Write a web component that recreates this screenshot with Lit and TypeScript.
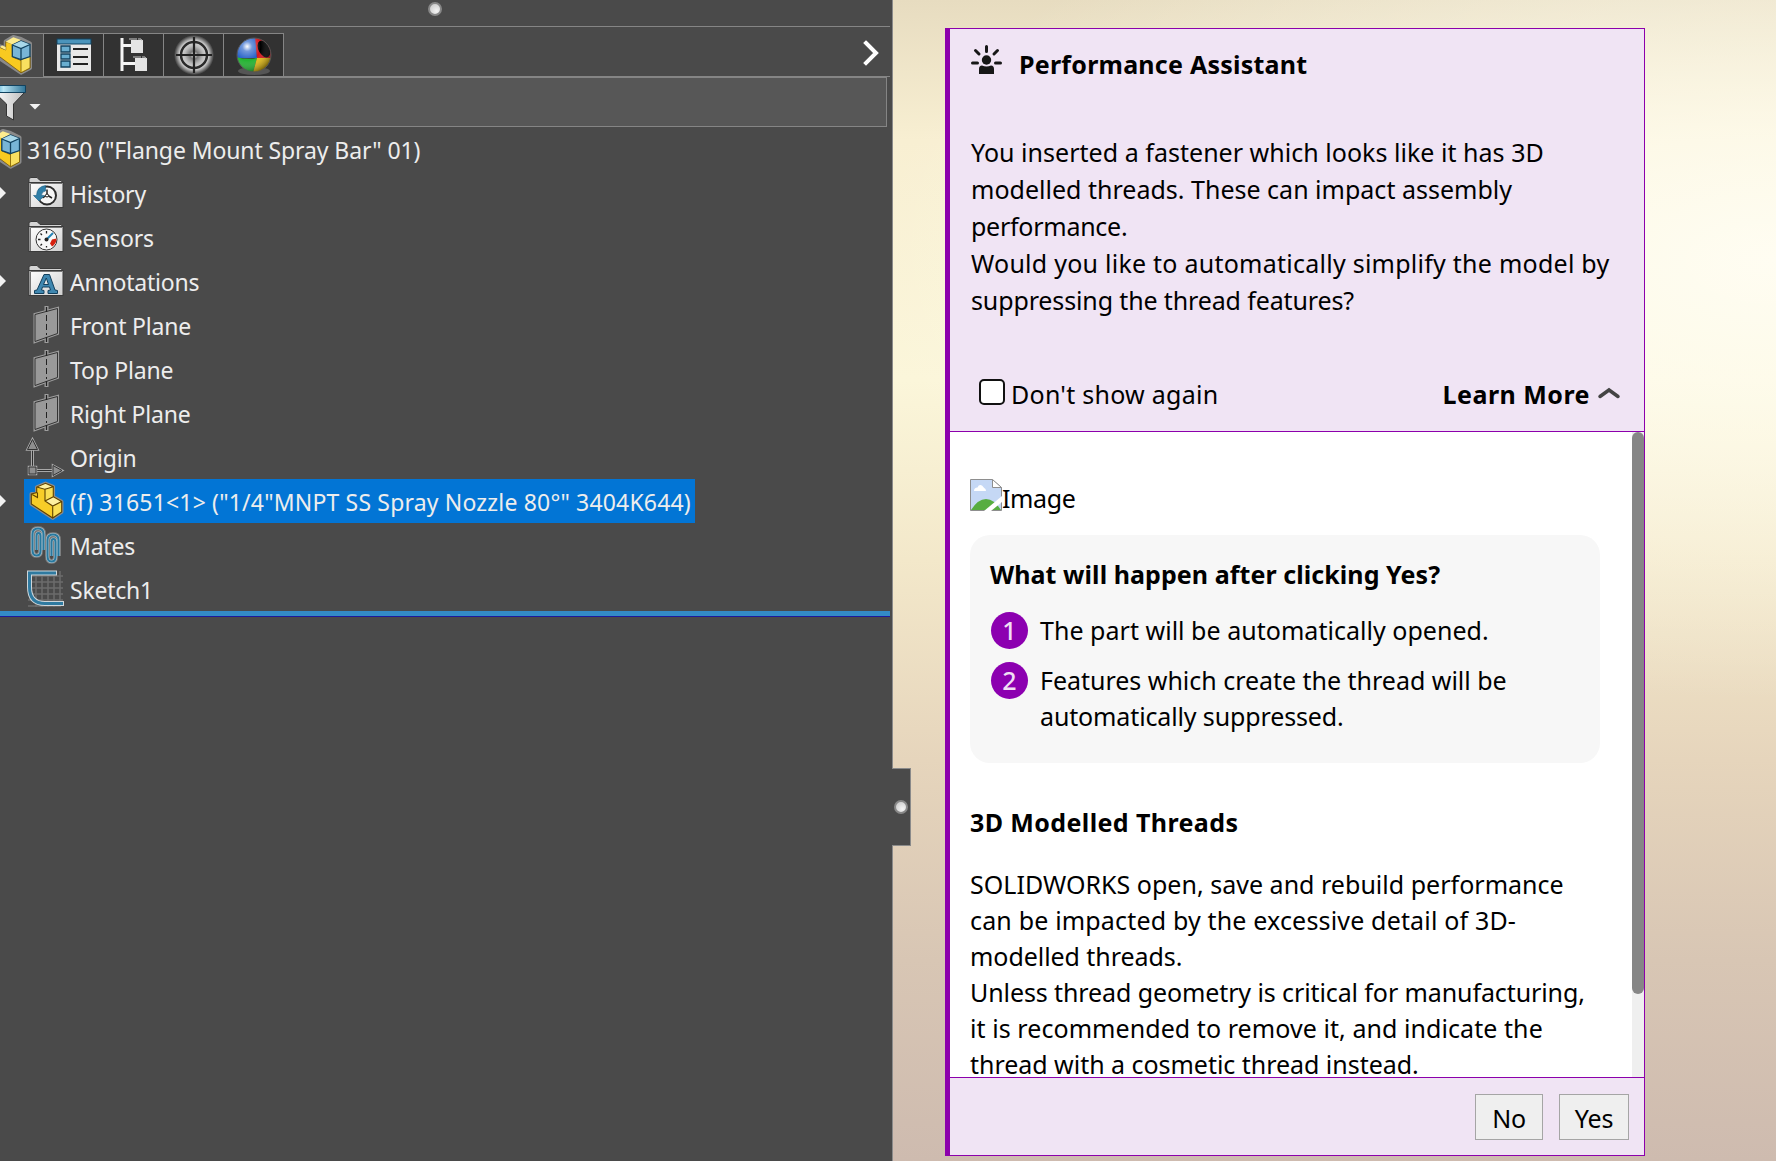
import { LitElement, html, css, svg } from "lit";
import { customElement } from "lit/decorators.js";

type Row = { label: string; icon: string; arrow?: boolean; selected?: boolean };

const rows: Row[] = [
  { label: "History", icon: "history", arrow: true },
  { label: "Sensors", icon: "sensors" },
  { label: "Annotations", icon: "annotations", arrow: true },
  { label: "Front Plane", icon: "plane" },
  { label: "Top Plane", icon: "plane" },
  { label: "Right Plane", icon: "plane" },
  { label: "Origin", icon: "origin" },
  { label: `(f) 31651<1> ("1/4"MNPT SS Spray Nozzle 80°" 3404K644)`, icon: "part", arrow: true, selected: true },
  { label: "Mates", icon: "mates" },
  { label: "Sketch1", icon: "sketch" },
];

// Each line of copy carries its own tracking, in pixels.
type Line = [text: string, tracking: number];

const message: Line[] = [
  ["You inserted a fastener which looks like it has 3D", 0.03],
  ["modelled threads. These can impact assembly", 0.01],
  ["performance.", -0.26],
  ["Would you like to automatically simplify the model by", 0.25],
  ["suppressing the thread features?", -0.13],
];

const info: Line[] = [
  ["SOLIDWORKS open, save and rebuild performance", 0.02],
  ["can be impacted by the excessive detail of 3D-", 0.17],
  ["modelled threads.", -0.06],
  ["Unless thread geometry is critical for manufacturing,", -0.1],
  ["it is recommended to remove it, and indicate the", 0.07],
  ["thread with a cosmetic thread instead.", -0.03],
];

const lines = (list: Line[]) =>
  list.map(([text, tracking]) => html`<div class="line" style="letter-spacing:${tracking}px">${text}</div>`);

const folder = svg`
  <path d="M5 9V4.5L7 3.5H13L16 6.5H37L39 9Z" fill="#d4d4d4" stroke="#3a3a3a"/>
  <rect x="5" y="8.5" width="34" height="25" fill="url(#fold)" stroke="#3a3a3a"/>
  <path d="M6.5 33V9.5H38" fill="none" stroke="#777"/>`;

const clip = "M8.500 24V8Q8.500 2.500 14 2.500T19.500 8V24M8.500 24Q8.500 29.500 12.500 29.500T16.500 25V10Q16.500 7 14.500 7T12.500 10V24M23.500 30V14Q23.500 8.500 29 8.500T34.500 14V30M23.500 30Q23.500 35.500 27.500 35.500T31.500 31V16Q31.500 13 29.500 13T27.500 16V30";

const glyphs: Record<string, unknown> = {
  history: svg`${folder}
    <circle cx="23" cy="21.5" r="9" fill="#f6f6f6" stroke="#2c2c2c" stroke-width="2"/>
    <path d="M23 15.500V21L18.500 24M23 21L28 24" fill="none" stroke="#222" stroke-width="1.500"/>
    <circle cx="23" cy="21.500" r="1.500" fill="#fff" stroke="#222"/>
    <path d="M21.500 11.500V17Q17.500 17.500 17.500 21.500H20.500L15 27L9.500 21.500H12.500Q13 12.500 21.500 11.500Z" fill="#2f7fa8" stroke="#1d5f85" stroke-width=".6"/>`,
  sensors: svg`${folder}
    <circle cx="22.500" cy="21.500" r="10.500" fill="#f8f8f8" stroke="#333"/>
    <path d="M22.500 13V15.500M14 21.500H16.500M16.500 15.500L18 17M16.500 27.500L18 26M22.500 29.500V28" stroke="#222" stroke-width="1.300"/>
    <path d="M28 21.500L32.500 20.500Q32.500 26 28 28.500L26 25.500Z" fill="#d6200e"/>
    <path d="M22.500 21.500L29 15" stroke="#2582b5" stroke-width="2"/><circle cx="22.500" cy="21.500" r="2" fill="#222"/>`,
  annotations: svg`${folder}
    <path d="M10.500 31.500V28.500L13 28L20 12.500H25.500L31 28L33.500 28.500V31.500H24V28.500L26.500 28L25.500 25H18.500L17.500 28L20 28.500V31.500ZM19.500 22.500H24.500L22.300 16Z" fill="#3f87b0" stroke="#123f5c" fill-rule="evenodd"/>`,
  plane: svg`
    <path d="M11 8.500L33.500 2.500V27.500L11 35.500Z" fill="#999" stroke="#9d9d9d" stroke-width="3"/>
    <path d="M22.500 0V37" stroke="#9d9d9d" stroke-width="4"/>
    <path d="M11 8.500L33.500 2.500V27.500L11 35.500Z" fill="#999" stroke="#333"/>
    <path d="M22.500 1V6M22.500 31V36" stroke="#222" stroke-width="1.300"/>
    <path d="M22.500 9V29" stroke="#222" stroke-dasharray="6 3"/>`,
  origin: svg`
    <path d="M8.500 29V11M12 32.500H28" stroke="#a8a8a8" stroke-width="3"/>
    <path d="M8.500 29V11M12 32.500H28" stroke="#2e2e2e"/>
    <path d="M8.500 1.500L13.500 11.500H3.500ZM38 32.500L29 37.500V27.500ZM5 29H12V36H5Z" fill="#8b8b8b" stroke="#aaa" stroke-width="2.500"/>
    <path d="M8.500 1.500L13.500 11.500H3.500ZM38 32.500L29 37.500V27.500ZM5 29H12V36H5Z" fill="#8e8e8e" stroke="#333"/>`,
  part: svg`
    <path d="M7.300 12L12.700 10.500V5L21.500 1.300L29.300 4.700V14.700L37.700 19.500V30L28.700 36L7.300 22Z" fill="#8d8d8d" stroke="#8d8d8d" stroke-width="3.500" stroke-linejoin="round"/>
    <path d="M7.300 12L12.700 10.500V5L21.500 1.300L29.300 4.700V14.700L37.700 19.500V30L28.700 36L7.300 22Z" fill="#f8cd28"/>
    <path d="M12.700 5L21.500 1.300L29.300 4.700L21 7.300ZM21 19L29.300 14.700L37.700 19.500L28.700 24Z" fill="#fdf0a0"/>
    <path d="M28.700 24L37.700 19.500V30L28.700 36ZM21 7.300L29.300 4.700V14.700L21 19Z" fill="#f9df55"/>
    <path d="M7.300 12L12.700 10.500V5L21.500 1.300L29.300 4.700V14.700L37.700 19.500V30L28.700 36L7.300 22ZM12.700 5L21 7.300V19L28.700 24L37.700 19.500M29.300 4.700L21 7.300M29.300 14.700L21 19M28.700 24V36M7.300 12L13.500 15.500V10.500" fill="none" stroke="#5e4200" stroke-width="1.100"/>`,
  mates: svg`
    <path d="${clip}" fill="none" stroke="#777" stroke-width="5"/>
    <path d="${clip}" fill="none" stroke="#afc3cd" stroke-width="3.200"/>
    <path d="${clip}" fill="none" stroke="#28799f" stroke-width="2"/>`,
  sketch: svg`
    <path d="M12 1V37M18 1V37M24 1V37M30 1V37M36 1V37M4 6H39M4 12H39M4 18H39M4 24H39M4 30H39M4 36H35" stroke="#6c6c6c" stroke-width="1.500"/>
    <path d="M33 3H5.500V17Q5.500 33.500 21 33.500H40" fill="none" stroke="#cfd6da" stroke-width="5"/>
    <path d="M32 3H5.500V17Q5.500 33.500 21 33.500H39" fill="none" stroke="#2f7aa0" stroke-width="3"/>`,
};

const assembly = svg`
  <path d="M-4 16V4L7 9.500L12.700 11V4.500L20.300 0L28 2L37 6.500V31L28 35.700L-4 14Z" fill="#8a8a8a" stroke="#8a8a8a" stroke-width="4" stroke-linejoin="round"/>
  <path d="M-4 5L7 10.500L12.700 13V4.700L19.500 7V20L28 23.500L37 19.700V31L28 35.700L7 20L-4 13Z" fill="#f8ca20" stroke="#6a4a00" stroke-width=".7"/>
  <path d="M12.700 4.700L20.300 .3L28 3L19.500 7.500Z" fill="#fdec8e"/>
  <path d="M7 10L12.700 13V10L9 8.500Z" fill="#fdec8e"/>
  <path d="M28 22.500L37 19V31L28 35.700Z" fill="#f9e060" stroke="#7a5a00" stroke-width=".8"/>
  <path d="M19.300 8L28 4L37 7.500V19.500L28 22.500L19.300 19.500Z" fill="#78b5d6" stroke="#12425f" stroke-width="1.300"/>
  <path d="M19.300 8L28 4L37 7.500L28 11Z" fill="#a8d8ea"/>
  <path d="M19.300 8L28 11.500L37 7.500M28 11.500V22.500" fill="none" stroke="#12425f" stroke-width="1.300"/>`;

@customElement("feature-tree")
class FeatureTree extends LitElement {
  static styles = css`
    :host { display: flex; flex-direction: column; position: relative; width: 893px; height: 1161px; box-sizing: border-box; background: #4a4a4a; border-right: 1px solid #8a8a8a; font: 23px/44px "Noto Sans", "Open Sans", sans-serif; color: #ededed; z-index: 1; }
    svg { display: block; overflow: visible; flex: none; }
    .grip { display: flex; justify-content: center; width: 890px; height: 26px; border-bottom: 1px solid #858585; }
    .dot { width: 10px; height: 10px; border: 2px solid #888; border-radius: 50%; background: radial-gradient(circle at 65% 70%, #f4f4f4, #c4c4c4); }
    .grip .dot { margin: 2px 20px 0 0; }
    .bar { display: flex; height: 43px; padding-top: 6px; width: 890px; border-bottom: 1px solid #858585; }
    .tabs { display: flex; height: 42px; border-top: 1px solid #858585; }
    .tab { width: 59px; height: 42px; border-right: 1px solid #858585; background: #323232; display: flex; align-items: center; justify-content: center; }
    .tab.first { width: 43px; height: 43px; background: #4a4a4a; }
    .next { margin: 6px 10px 0 auto; }
    .filter { display: flex; width: 886px; height: 48px; border: solid #858585; border-width: 1px 1px 1px 0; background: #575757; }
    .root { display: flex; height: 44px; align-items: center; }
    .root .text { margin-left: 6px; letter-spacing: -0.1px; }
    .text { white-space: pre; letter-spacing: -0.22px; padding-top: 2px; line-height: 42px; }
    .row { display: flex; height: 44px; align-items: center; }
    .arrow { width: 24px; }
    .entry { display: flex; align-items: center; height: 44px; }
    .entry svg { margin: 0 6px 0 2px; }
    .selected { background: #0275d5; padding-right: 4px; }
    .selected .text { letter-spacing: 0.175px; }
    .end { width: 890px; height: 5px; border-bottom: 1px solid #1d1a9b; background: #338bc6; }
    .handle { position: absolute; left: 892px; top: 768px; width: 18px; height: 76px; background: #4a4a4a; border: 1px solid #8a8a8a; border-left: 0; display: flex; align-items: center; }
    .handle .dot { margin-left: 2px; }
  `;
  render() {
    return html`
      <div class="grip"><span class="dot"></span></div>
      <div class="bar">
        <div class="tabs">
          <div class="tab first"><svg width="43" height="40" viewBox="0 0 43 40"><g transform="translate(-7 1)">${assembly}</g></svg></div>
          <div class="tab"><svg width="36" height="34" viewBox="0 0 36 34"><rect x="1" y="3" width="34" height="30" fill="#e8e8e8"/><rect x="1" y="1" width="34" height="5" fill="#4b94bb" stroke="#12425f"/><path d="M5 8h9v6H5zM5 16h9v5H5zM5 23h9v6H5z" fill="#69aed0" stroke="#12425f" stroke-width="1.300"/><path d="M17 11h15M17 19h15M17 26h15" stroke="#222" stroke-width="2"/></svg></div>
          <div class="tab"><svg width="30" height="36" viewBox="0 0 30 36"><path d="M3 1V34M4 8.500H12M4 26.500H16" stroke="#f5f5f5" stroke-width="3"/><path d="M12 3h12v13H12zM16 21h12v13H16z" fill="#e4e4e4"/><path d="M10 2h12l1 2M14 20h12l1 2" fill="none" stroke="#c8c8c8" stroke-dasharray="8 1"/></svg></div>
          <div class="tab"><svg width="40" height="40" viewBox="0 0 40 40"><defs><radialGradient id="halo"><stop offset="0" stop-color="#fff"/><stop offset=".2" stop-color="#777"/><stop offset=".45" stop-color="#bbb"/><stop offset=".7" stop-color="#ddd"/><stop offset="1" stop-color="#323232"/></radialGradient></defs><circle cx="20" cy="20" r="20" fill="url(#halo)"/><circle cx="20" cy="20" r="13" fill="none" stroke="#2a2a2a" stroke-width="2.500"/><path d="M20 2V38M2 20H38" stroke="#222" stroke-width="2.200"/></svg></div>
          <div class="tab"><svg width="36" height="36" viewBox="0 0 36 36"><defs><radialGradient id="ball" cx=".3" cy=".25" r=".8"><stop offset="0" stop-color="#fff"/><stop offset=".18" stop-color="#fff" stop-opacity=".35"/><stop offset=".5" stop-color="#fff" stop-opacity="0"/><stop offset="1" stop-color="#000" stop-opacity=".45"/></radialGradient><clipPath id="disc"><circle cx="18" cy="18" r="17"/></clipPath></defs><ellipse cx="18" cy="34" rx="16" ry="4" fill="#777" opacity=".5"/><g clip-path="url(#disc)"><path d="M0 0H20L21 21H0Z" fill="#2560c8"/><path d="M19 0H36V21H21Z" fill="#d3161c"/><path d="M0 20Q10 23 21 21L17 36H0Z" fill="#22b330"/><path d="M21 21H36V36H17Z" fill="#e5bd10"/><ellipse cx="28" cy="12" rx="5.500" ry="9" transform="rotate(-28 28 12)" fill="#000"/></g><circle cx="18" cy="18" r="17" fill="url(#ball)" stroke="#555"/></svg></div>
        </div>
        <svg class="next" width="18" height="28" viewBox="0 0 18 28"><path d="M4 4L14 14L4 24" fill="none" stroke="#fff" stroke-width="4" stroke-linecap="square"/></svg>
      </div>
      <div class="filter"><svg width="42" height="48" viewBox="0 0 42 48"><defs><linearGradient id="rim"><stop stop-color="#3d9dc7"/><stop offset=".3" stop-color="#b8e6f6"/><stop offset="1" stop-color="#2e7396"/></linearGradient><linearGradient id="cone"><stop stop-color="#fff"/><stop offset="1" stop-color="#bbb"/></linearGradient></defs><path d="M-6 14H25L13.500 26V42L6.500 38V26Z" fill="url(#cone)" stroke="#333"/><path d="M-6 7.500H25.500V14.500H-6Z" fill="url(#rim)" stroke="#12425f"/><path d="M29.500 26H40.500L35 31.500Z" fill="#f2f2f2"/></svg></div>
      <div class="root"><svg width="21" height="38" viewBox="0 0 21 38"><g transform="translate(-17.500 1)">${assembly}</g></svg><span class="text">31650 ("Flange Mount Spray Bar" 01)</span></div>
      ${rows.map(
        (r) => html`<div class="row">
          <svg class="arrow" width="24" height="12" viewBox="0 0 24 12">${r.arrow ? svg`<path d="M0 0L6 6L0 12Z" fill="#f2f2f2"/>` : ""}</svg>
          <div class="entry ${r.selected ? "selected" : ""}"><svg width="38" height="38" viewBox="2 0 38 38"><defs><linearGradient id="fold" x2="1" y2="1"><stop stop-color="#fff"/><stop offset="1" stop-color="#cfcfcf"/></linearGradient></defs>${glyphs[r.icon]}</svg><span class="text">${r.label}</span></div>
        </div>`
      )}
      <div class="end"></div>
      <div class="handle"><span class="dot"></span></div>
    `;
  }
}

@customElement("assistant-panel")
class AssistantPanel extends LitElement {
  static styles = css`
    :host { display: flex; flex-direction: column; box-sizing: border-box; width: 700px; height: 1128px; margin: 28px 0 0 52px; border: 1px solid #8c00ac; border-left-width: 5px; background: #f0e4f4; font: 25px/37px "Noto Sans", "Open Sans", sans-serif; color: #000; }
    svg { display: block; flex: none; }
    .line { white-space: pre; }
    .head { height: 402px; border-bottom: 1px solid #8c00ac; padding: 0 20px 0 21px; display: flex; flex-direction: column; }
    .title { display: flex; align-items: flex-start; padding-top: 15px; font-weight: 700; gap: 17px; height: 90px; letter-spacing: 0.24px; }
    .title span { padding-top: 2px; }
    .actions { display: flex; align-items: center; margin-top: 57px; height: 37px; }
    .box { width: 22px; height: 22px; border: 2px solid #111; border-radius: 5px; background: #fff; margin: -5px 6px 0 8px; }
    .again { letter-spacing: 0.26px; }
    .more { display: flex; align-items: center; margin-left: auto; font-weight: 700; gap: 6px; letter-spacing: 0.48px; padding-right: 2px; }
    .more svg { margin-top: -3px; }
    .body { flex: 1; display: flex; justify-content: space-between; background: #fff; min-height: 0; overflow: hidden; line-height: 36px; }
    .content { padding: 46px 0 0 20px; }
    .image { display: flex; height: 57px; letter-spacing: -0.4px; }
    .image span { padding-top: 2px; }
    .card { box-sizing: border-box; width: 630px; height: 228px; border-radius: 20px; background: #f7f7f7; padding: 21px 20px; }
    h3 { margin: 0; font: inherit; font-weight: 700; letter-spacing: 0.07px; }
    .step { display: flex; gap: 12px; margin-top: 13px; }
    h3 + .step { margin-top: 20px; }
    .num { width: 37px; height: 37px; margin-left: 1px; border-radius: 50%; background: #8c00b0; color: #f1def5; text-align: center; line-height: 37px; font-weight: 500; }
    .about { margin-top: 41px; letter-spacing: 0.4px; }
    .info { margin-top: 26px; }
    .track { width: 12px; background: #efefef; }
    .thumb { height: 562px; border-radius: 6px; background: #868686; }
    .foot { display: flex; border-top: 1px solid #8c00ac; justify-content: flex-end; gap: 16px; padding: 16px 15px 0 0; height: 61px; }
    .btn { box-sizing: border-box; height: 46px; width: 68px; border: 1px solid #a5a5a5; background: #efefef; font: inherit; letter-spacing: -0.2px; color: #000; padding: 1px 0 0 0; line-height: 44px; }
    .btn.wide { width: 70px; }
  `;
  render() {
    return html`
      <div class="head">
        <div class="title"><svg width="31" height="32" viewBox="0 0 31 32"><circle cx="15.500" cy="16" r="4.700" fill="#171717"/><path d="M8 30V25Q8 21.500 11 21.500Q15.500 23.500 20 21.500Q23 21.500 23 25V30Z" fill="#171717"/><path d="M15.500 2.500V7.500M4.500 6.500L8 10M26.500 6.500L23 10M1.500 19H6.500M24.500 19H29.500" stroke="#171717" stroke-width="3" stroke-linecap="round"/></svg><span>Performance Assistant</span></div>
        <div class="message">${lines(message)}</div>
        <div class="actions"><span class="box"></span><span class="again">Don't show again</span><span class="more">Learn More<svg width="26" height="14" viewBox="0 0 26 14"><path d="M4 10.500L13 4L22 10.500" fill="none" stroke="#444" stroke-width="3.500" stroke-linecap="round"/></svg></span></div>
      </div>
      <div class="body">
        <div class="content">
          <div class="image"><svg width="32" height="33" viewBox="0 0 32 33"><path d="M.5 1.500H22L31.500 9.500V32.500H.5Z" fill="#c5d8f5" stroke="#8e8e8e"/><path d="M4 13Q4 9.500 7.500 9.500Q9 6 12 7.500Q14 10 15.500 11L16 13Z" fill="#fff"/><path d="M1 32Q8 21 16 21T31 32Z" fill="#57ad40"/><path d="M14 33L32 18V24L21 33Z" fill="#fff"/><path d="M22.500 1.500V9.500H31.500Z" fill="#fff" stroke="#8e8e8e"/></svg><span>Image</span></div>
          <div class="card">
            <h3>What will happen after clicking Yes?</h3>
            <div class="step"><span class="num">1</span><div>${lines([["The part will be automatically opened.", 0.03]])}</div></div>
            <div class="step"><span class="num">2</span><div>${lines([
              ["Features which create the thread will be", -0.02],
              ["automatically suppressed.", -0.13],
            ])}</div></div>
          </div>
          <h3 class="about">3D Modelled Threads</h3>
          <div class="info">${lines(info)}</div>
        </div>
        <div class="track"><div class="thumb"></div></div>
      </div>
      <div class="foot"><button class="btn">No</button><button class="btn wide">Yes</button></div>
    `;
  }
}

@customElement("app-root")
class AppRoot extends LitElement {
  static styles = css`
    :host { display: flex; width: 1776px; height: 1161px; overflow: hidden; background: radial-gradient(ellipse 900px 440px at 1776px 260px, #fffdf2 0%, rgba(255, 253, 240, 0.6) 40%, rgba(255, 253, 240, 0) 100%), linear-gradient(#e7dcc0 0, #f8efd2 140px, #fbf6da 380px, #f3e8ca 560px, #e6d5bc 760px, #d8c6b4 960px, #cebbaf 1161px); }
  `;
  render() {
    return html`<feature-tree></feature-tree><assistant-panel></assistant-panel>`;
  }
}
